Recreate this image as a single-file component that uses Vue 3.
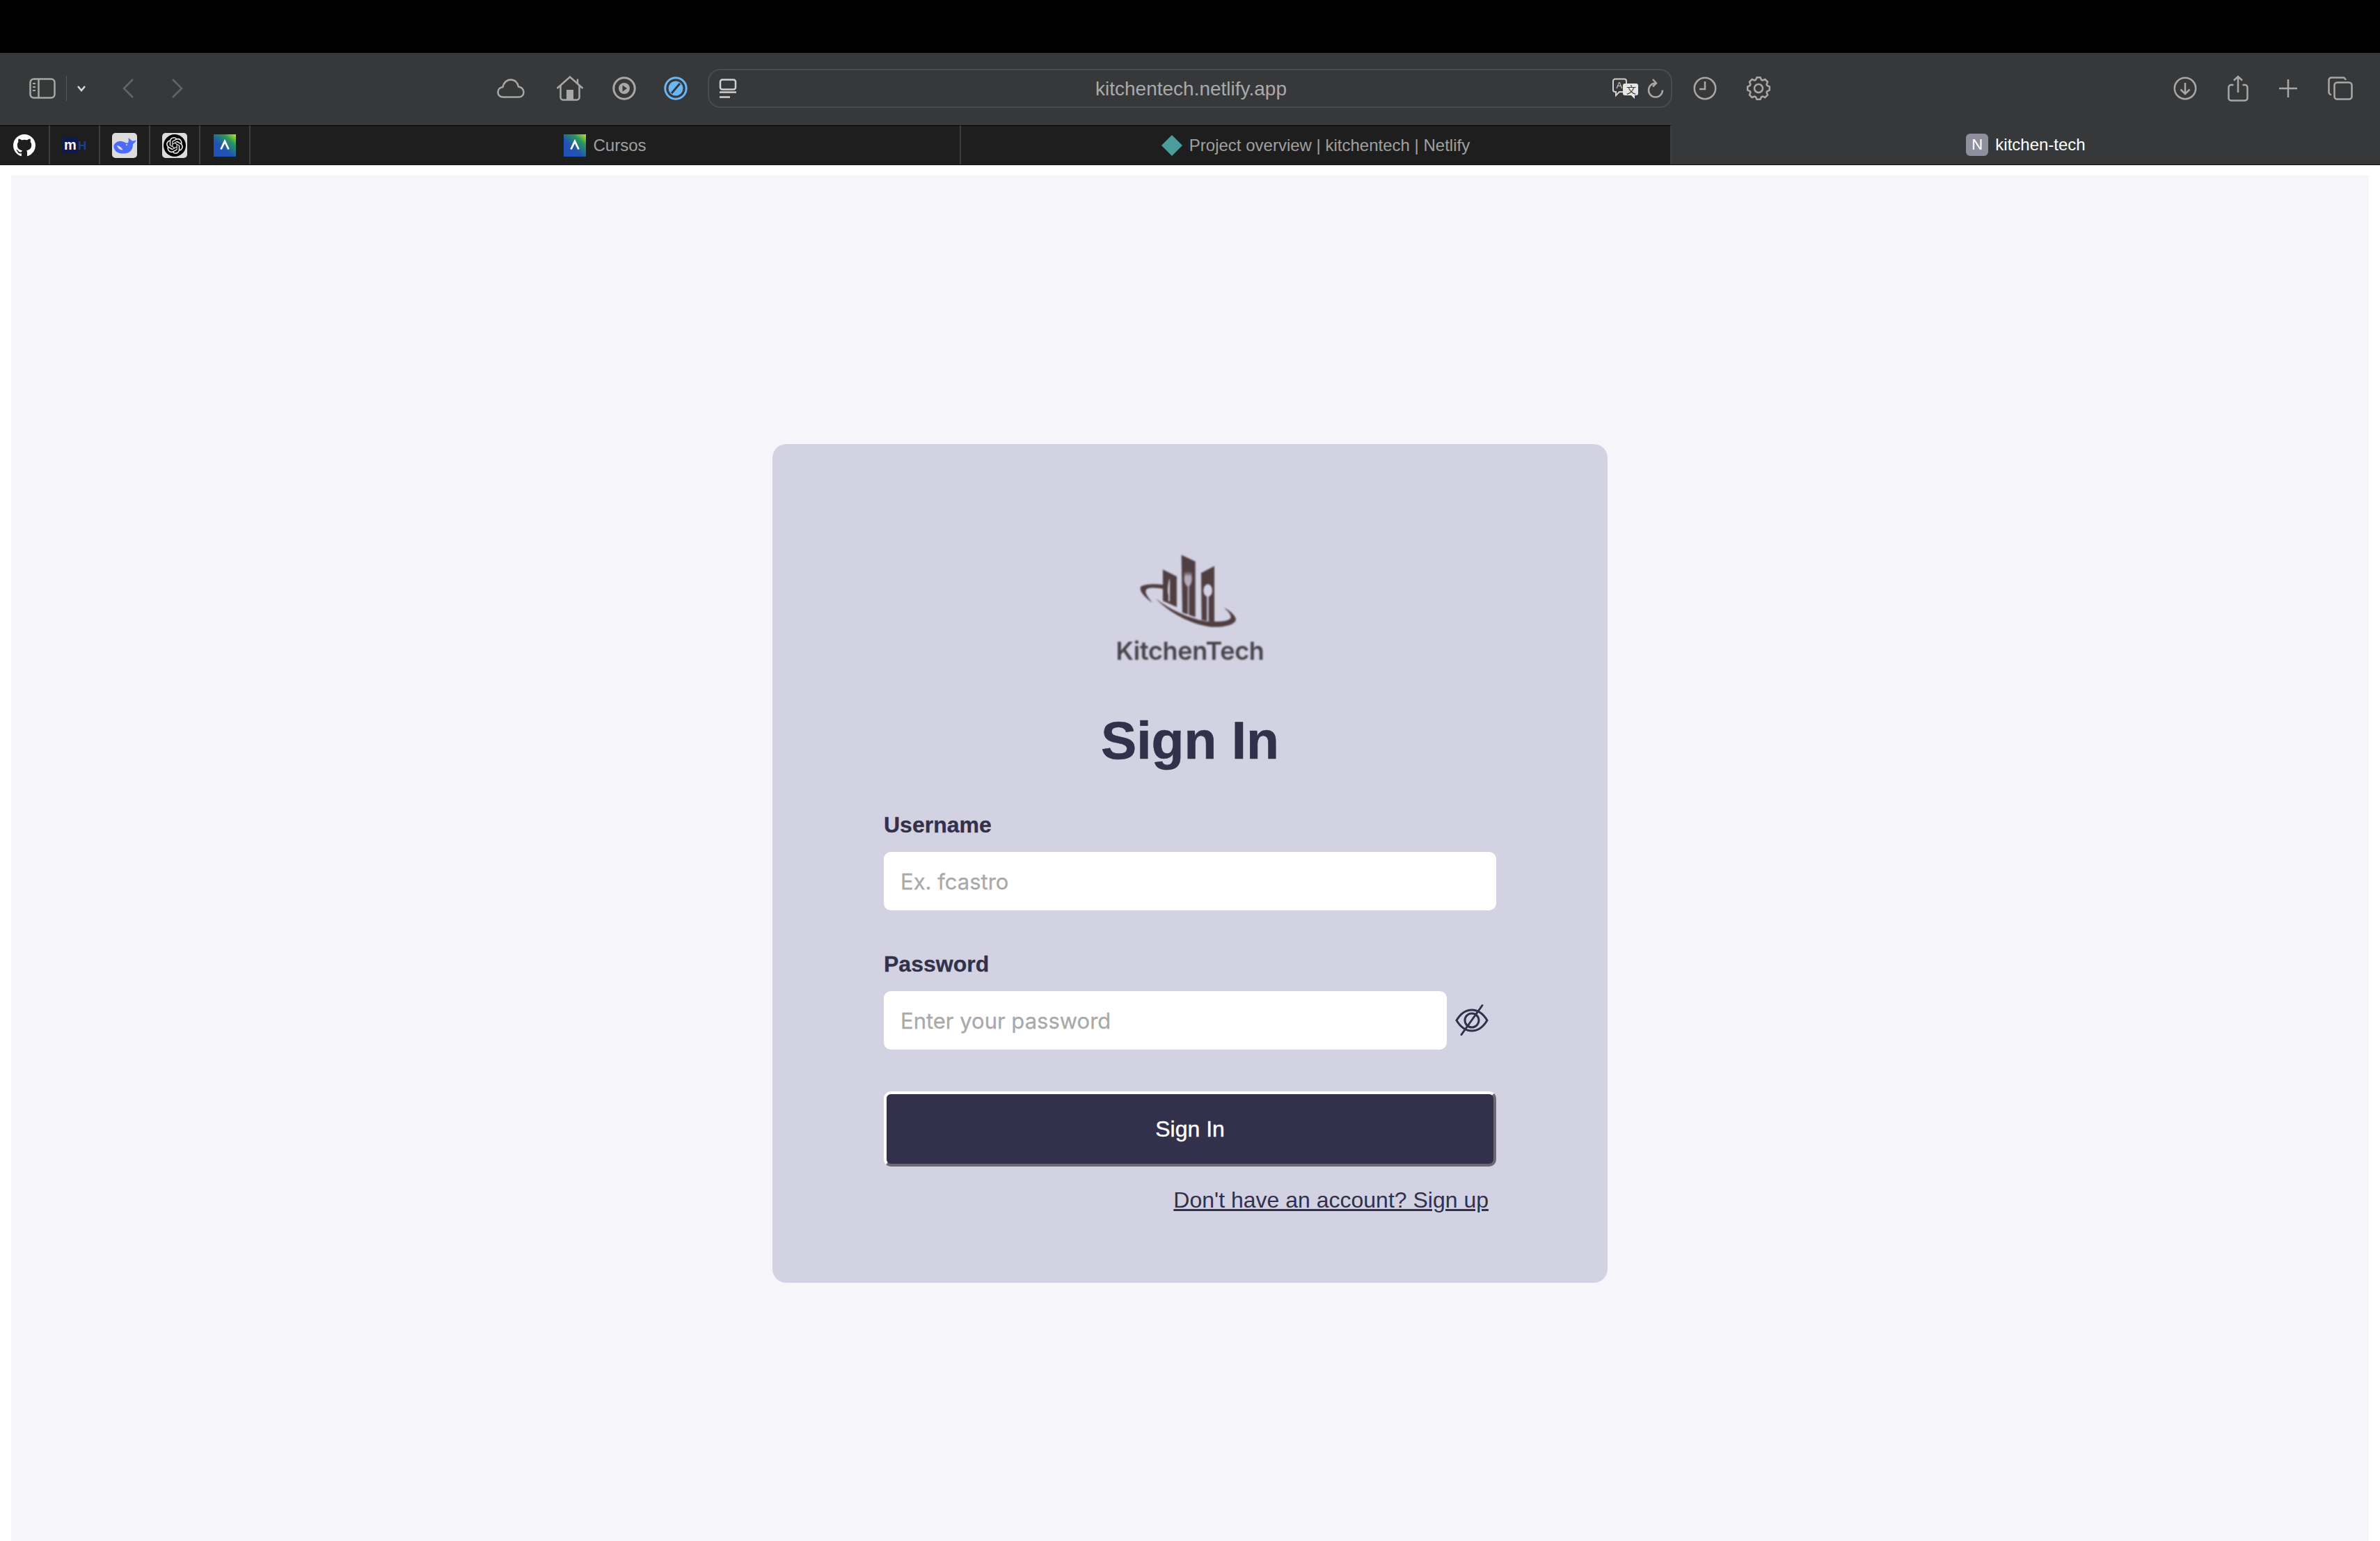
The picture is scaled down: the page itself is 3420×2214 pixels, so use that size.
<script setup>
import { ref } from "vue";

const username = ref("");
const password = ref("");

// safari gear, 8 teeth
const gearPath = () => {
  const pts = [];
  for (let i = 0; i < 8; i++) {
    const a = (i * Math.PI) / 4 - Math.PI / 2;
    const step = 0.2;
    pts.push([a - step * 1.6, 13]);
    pts.push([a - step * 0.8, 16]);
    pts.push([a + step * 0.8, 16]);
    pts.push([a + step * 1.6, 13]);
  }
  return (
    pts
      .map(([a, r], i) => {
        const x = (18 + r * Math.cos(a)).toFixed(1);
        const y = (17 + r * Math.sin(a)).toFixed(1);
        return `${i ? "L" : "M"}${x} ${y}`;
      })
      .join(" ") + " Z"
  );
};
</script>

<template>
  <div class="screen">
    <div class="notch-bar"></div>

    <div class="toolbar">
      <div class="nav-group">
        <svg class="ico" width="38" height="30" viewBox="0 0 38 30">
          <rect x="1.5" y="1.5" width="35" height="27" rx="5" />
          <path d="M13.5 1.5V28.5" />
          <path d="M5 8h4M5 13h4M5 18h4" stroke-width="2" />
        </svg>
        <span class="nav-sep"></span>
        <svg class="ico chevron-small" width="14" height="10" viewBox="0 0 14 10">
          <path d="M2 2l5 6 5-6" stroke="#d8d8d8" />
        </svg>
        <svg class="ico dim back" width="18" height="30" viewBox="0 0 18 30">
          <path d="M16 2L3 15l13 13" />
        </svg>
        <svg class="ico dim forward" width="18" height="30" viewBox="0 0 18 30">
          <path d="M2 2l13 13L2 28" />
        </svg>
      </div>

      <div class="site-group">
        <svg class="ico" width="40" height="28" viewBox="0 0 40 28">
          <path d="M9 26.5C4 26.5 1.5 23 1.5 19.5C1.5 15.5 4.5 12.5 8.5 12C9.5 6 14 1.5 20 1.5C26 1.5 30 6 31 11.5C35.5 12 38.5 15.5 38.5 19.5C38.5 23.5 35.5 26.5 31 26.5Z" />
        </svg>
        <svg class="ico" width="40" height="36" viewBox="0 0 40 36">
          <path d="M1.5 18L20 1.5L38.5 18" />
          <path d="M6.5 14V31a3.5 3.5 0 0 0 3.5 3.5H30a3.5 3.5 0 0 0 3.5-3.5V14" />
          <path d="M31 4.5V12" />
          <rect x="15" y="20" width="10" height="14" fill="#a8a8a8" stroke="none" />
        </svg>
        <svg class="ico" width="34" height="34" viewBox="0 0 34 34">
          <circle cx="17" cy="17" r="15.2" stroke-width="3" />
          <circle cx="17" cy="17" r="8" fill="#a8a8a8" stroke="none" />
          <path d="M14.5 12.5l6.5 4.5-6.5 4.5z" fill="#37383a" stroke="none" />
        </svg>
        <svg width="34" height="34" viewBox="0 0 34 34">
          <circle cx="17" cy="17" r="15.2" fill="none" stroke="#6ab7f8" stroke-width="3" />
          <circle cx="17" cy="17" r="10.5" fill="#6ab7f8" />
          <path d="M23 10L11 24" stroke="#37383a" stroke-width="3" />
        </svg>
      </div>

      <div class="address-bar">
        <svg class="ico reader" width="26" height="28" viewBox="0 0 26 28">
          <rect x="2" y="1.5" width="22" height="14" rx="3" stroke="#d0d0d0" />
          <path d="M1 19.5H25M1 26.5H16" stroke="#d0d0d0" />
        </svg>
        <span class="url">kitchentech.netlify.app</span>
        <svg class="translate" width="38" height="30" viewBox="0 0 38 30">
          <path d="M4 1.5H17a3 3 0 0 1 3 3V17a3 3 0 0 1-3 3H10L5 25V20H4a3 3 0 0 1-3-3V4.5a3 3 0 0 1 3-3z" fill="#37383a" stroke="#d0d0d0" stroke-width="2" />
          <text x="5.5" y="15" class="translate-a">A</text>
          <path d="M18 8H34a3 3 0 0 1 3 3V22a3 3 0 0 1-3 3H32V30L27 25H18a3 3 0 0 1-3-3V11a3 3 0 0 1 3-3z" fill="#e6e6e6" />
          <text x="20" y="22" class="translate-x">文</text>
        </svg>
        <svg class="ico reload" width="24" height="28" viewBox="0 0 24 28">
          <path d="M12 6.5A10 10 0 1 0 22 16.5" />
          <path d="M8 1l5 5.5-5 5" />
        </svg>
      </div>

      <div class="tool-group">
        <svg class="ico" width="34" height="34" viewBox="0 0 34 34">
          <circle cx="17" cy="17" r="15.2" />
          <path d="M17 7V18H9" />
        </svg>
        <svg class="ico" width="36" height="34" viewBox="0 0 36 34">
          <path :d="gearPath()" />
          <circle cx="18" cy="17" r="6" />
        </svg>
      </div>

      <div class="window-group">
        <svg class="ico" width="34" height="34" viewBox="0 0 34 34">
          <circle cx="17" cy="17" r="15.2" />
          <path d="M17 9V25M10.5 18.5L17 25l6.500-6.500" />
        </svg>
        <svg class="ico" width="30" height="38" viewBox="0 0 30 38">
          <path d="M8.500 14H5a3.500 3.500 0 0 0-3.500 3.500V33A3.500 3.500 0 0 0 5 36.500H25a3.500 3.500 0 0 0 3.500-3.500V17.500A3.500 3.500 0 0 0 25 14H21.500" />
          <path d="M15 2V25M9 7.500L15 2l6 5.500" />
        </svg>
        <svg class="ico" width="26" height="28" viewBox="0 0 26 28">
          <path d="M13 1V27M0 14H26" />
        </svg>
        <svg class="ico" width="36" height="34" viewBox="0 0 36 34">
          <path d="M5 26a3.500 3.500 0 0 1-3.500-3.500V5A3.500 3.500 0 0 1 5 1.500H22A3.500 3.500 0 0 1 25.500 5" />
          <rect x="9.500" y="8.500" width="25" height="24" rx="4" />
        </svg>
      </div>
    </div>

    <div class="tabstrip">
      <div class="pinned">
        <svg width="32" height="32" viewBox="0 0 16 16">
          <path fill="#fff" d="M8 0C3.58 0 0 3.58 0 8c0 3.54 2.29 6.53 5.47 7.59.4.07.55-.17.55-.38 0-.19-.01-.82-.01-1.49-2.01.37-2.53-.49-2.69-.94-.09-.23-.48-.94-.82-1.13-.28-.15-.68-.52-.01-.53.63-.01 1.08.58 1.23.82.72 1.21 1.87.87 2.33.66.07-.52.28-.87.51-1.07-1.78-.2-3.64-.89-3.64-3.95 0-.87.31-1.59.82-2.15-.08-.2-.36-1.02.08-2.12 0 0 .67-.21 2.2.82.64-.18 1.32-.27 2-.27.68 0 1.36.09 2 .27 1.53-1.04 2.2-.82 2.2-.82.44 1.1.16 1.92.08 2.12.51.56.82 1.27.82 2.15 0 3.07-1.87 3.75-3.65 3.95.29.25.54.73.54 1.48 0 1.07-.01 1.93-.01 2.2 0 .21.15.46.55.38A8.013 8.013 0 0016 8c0-4.420-3.580-8-8-8z" />
        </svg>
      </div>
      <div class="pinned">
        <svg width="34" height="24" viewBox="0 0 34 24">
          <rect x="0" y="1" width="22" height="22" fill="#0b1a54" />
          <text x="2" y="18" class="mh-m">m</text>
          <text x="22" y="18" class="mh-h">H</text>
        </svg>
      </div>
      <div class="pinned">
        <svg class="favicon-box" width="36" height="36" viewBox="0 0 36 36">
          <rect width="36" height="36" rx="5" fill="#dcdcdc" />
          <path fill="#4d6bfe" d="M2.500 17.500C5 13 10 11 14 12C18 13 20 15 22 14.500C24 14 24 11 23.500 7C26 9 28 10.500 29 11.500C31 11.500 33 11 34.500 10C34 13 32 15 30 16C30 21 28 26 24 28C20 30 12 30 8 28C4 26 2 22 2.500 17.500Z" />
          <path fill="#dcdcdc" d="M7 18C10 18 14 21 15.500 24.500C12 25 8 22 7 18Z" />
          <circle cx="21" cy="17" r="1.100" fill="#dcdcdc" />
        </svg>
      </div>
      <div class="pinned">
        <svg class="favicon-box" width="36" height="36" viewBox="0 0 36 36">
          <rect width="36" height="36" rx="5" fill="#dcdcdc" />
          <circle cx="18" cy="18" r="16" fill="#000" />
          <path transform="translate(6 6)" fill="#e8e8e8" d="M22.2819 9.8211a5.9847 5.9847 0 0 0-.5157-4.9108 6.0462 6.0462 0 0 0-6.5098-2.9A6.0651 6.0651 0 0 0 4.9807 4.1818a5.9847 5.9847 0 0 0-3.9977 2.9 6.0462 6.0462 0 0 0 .7427 7.0966 5.98 5.98 0 0 0 .511 4.9107 6.051 6.051 0 0 0 6.5146 2.9001A5.9847 5.9847 0 0 0 13.2599 24a6.0557 6.0557 0 0 0 5.7718-4.2058 5.9894 5.9894 0 0 0 3.9977-2.9001 6.0557 6.0557 0 0 0-.7475-7.0729zm-9.022 12.6081a4.4755 4.4755 0 0 1-2.8764-1.0408l.1419-.0804 4.7783-2.7582a.7948.7948 0 0 0 .3927-.6813v-6.7369l2.02 1.1686a.071.071 0 0 1 .038.052v5.5826a4.504 4.504 0 0 1-4.4945 4.4944zm-9.6607-4.1254a4.4708 4.4708 0 0 1-.5346-3.0137l.142.0852 4.783 2.7582a.7712.7712 0 0 0 .7806 0l5.8428-3.3685v2.3324a.0804.0804 0 0 1-.0332.0615L9.74 19.9502a4.4992 4.4992 0 0 1-6.1408-1.6464zM2.3408 7.8956a4.485 4.485 0 0 1 2.3655-1.9728V11.6a.7664.7664 0 0 0 .3879.6765l5.8144 3.3543-2.0201 1.1685a.0757.0757 0 0 1-.071 0l-4.8303-2.7865A4.504 4.504 0 0 1 2.3408 7.872zm16.5963 3.8558L13.1038 8.364 15.1192 7.2a.0757.0757 0 0 1 .071 0l4.8303 2.7913a4.4944 4.4944 0 0 1-.6765 8.1042v-5.6772a.79.79 0 0 0-.407-.667zm2.0107-3.0231l-.142-.0852-4.7735-2.7818a.7759.7759 0 0 0-.7854 0L9.409 9.2297V6.8974a.0662.0662 0 0 1 .0284-.0615l4.8303-2.7866a4.4992 4.4992 0 0 1 6.6802 4.66zM8.3065 12.863l-2.02-1.1638a.0804.0804 0 0 1-.038-.0567V6.0742a4.4992 4.4992 0 0 1 7.3757-3.4537l-.142.0805L8.704 5.459a.7948.7948 0 0 0-.3927.6813zm1.0976-2.3654l2.602-1.4998 2.6069 1.4998v2.9994l-2.5974 1.4997-2.6067-1.4997Z" />
        </svg>
      </div>
      <div class="pinned">
        <svg width="32" height="32" viewBox="0 0 32 32">
          <defs>
            <linearGradient id="cursosA" x1="1" y1="0" x2="0.3" y2="0.8">
              <stop offset="0" stop-color="#c4e52f" />
              <stop offset="0.35" stop-color="#2a9a58" />
              <stop offset="0.8" stop-color="#2152b5" />
            </linearGradient>
          </defs>
          <rect width="32" height="32" fill="url(#cursosA)" />
          <path d="M10.500 21.500L16 10l5.500 11.500" fill="none" stroke="#fff" stroke-width="2.800" />
        </svg>
      </div>

      <div class="tab">
        <svg width="32" height="32" viewBox="0 0 32 32">
          <defs>
            <linearGradient id="cursosB" x1="1" y1="0" x2="0.3" y2="0.8">
              <stop offset="0" stop-color="#c4e52f" />
              <stop offset="0.35" stop-color="#2a9a58" />
              <stop offset="0.8" stop-color="#2152b5" />
            </linearGradient>
          </defs>
          <rect width="32" height="32" fill="url(#cursosB)" />
          <path d="M10.500 21.500L16 10l5.500 11.500" fill="none" stroke="#fff" stroke-width="2.800" />
        </svg>
        <span>Cursos</span>
      </div>
      <div class="tab">
        <svg width="30" height="30" viewBox="0 0 30 30">
          <path d="M15 0L30 15L15 30L0 15Z" fill="#4a9d9c" />
        </svg>
        <span>Project overview | kitchentech | Netlify</span>
      </div>
      <div class="tab tab-active">
        <span class="notion-badge">N</span>
        <span>kitchen-tech</span>
      </div>
    </div>

    <div class="page-frame">
      <div class="page">
        <div class="card">
          <div class="logo">
            <svg width="420" height="150" viewBox="0 0 1260 450">
              <path fill="#503f42" d="M593 112L653 140V380L597 360Z" />
              <path fill="#503f42" d="M513 175L573 205V337L513 310Z" />
              <path fill="#503f42" d="M678 190L735 160V402L680 392Z" />
              <path fill="#d3d2e3" opacity="0.75" d="M607 182L611 205L616 182L621 205L626 182L631 205L636 182L638 215C638 232 631 242 626 248V372H620V248C613 242 605 232 605 215Z" />
              <path fill="#d3d2e3" d="M541 215C534 240 532 270 537 285V312H543V215Z" />
              <ellipse cx="707" cy="265" rx="19" ry="27" fill="#d3d2e3" />
              <rect x="703" y="285" width="7" height="115" fill="#d3d2e3" />
              <path fill="#503f42" d="M513 240C480 236 430 236 417 250C410 270 440 300 468 318C445 290 430 270 445 258C465 250 495 255 513 258Z" />
              <path fill="#503f42" d="M482 300C540 360 630 410 720 422C770 425 825 415 828 390C825 370 800 350 775 338C795 355 810 372 805 385C790 402 745 400 700 398C620 385 540 345 482 300Z" />
            </svg>
            <div class="logo-name">KitchenTech</div>
          </div>

          <h1 class="title">Sign In</h1>

          <form class="form" @submit.prevent>
            <label class="field-label" for="username">Username</label>
            <input id="username" v-model="username" class="field-input" type="text" placeholder="Ex. fcastro" />

            <label class="field-label second" for="password">Password</label>
            <div class="password-row">
              <input id="password" v-model="password" class="field-input" type="password" placeholder="Enter your password" />
              <svg class="eye" width="48" height="48" viewBox="0 0 48 48">
                <path d="M2 24C8 14 16 9 24 9S40 14 46 24C40 34 32 39 24 39S8 34 2 24Z" />
                <circle cx="24" cy="24" r="10" />
                <path d="M39 2.500L9 44.500" stroke-linecap="round" />
              </svg>
            </div>

            <button class="submit" type="submit">Sign In</button>

            <div class="signup-row">
              <a class="signup-link" href="#">Don't have an account? Sign up</a>
            </div>
          </form>
        </div>
      </div>
    </div>
  </div>
</template>

<style>
html,
body {
  margin: 0;
  overflow: hidden;
}
</style>

<style scoped>
.screen {
  height: 100vh;
  display: flex;
  flex-direction: column;
  background: #fff;
  overflow: hidden;
  font-family: "Liberation Sans", Arial, sans-serif;
}

.notch-bar {
  height: 76px;
  flex: none;
  background: #000;
}

.toolbar {
  height: 104px;
  flex: none;
  display: flex;
  align-items: center;
  padding: 0 39px 2px 42px;
  box-sizing: border-box;
  background: #37383a;
}

.ico {
  fill: none;
  stroke: #a8a8a8;
  stroke-width: 2.500;
  flex: none;
}

.ico.dim {
  stroke: #646567;
}

.nav-group {
  width: 672px;
  flex: none;
  display: flex;
  align-items: center;
}

.nav-sep {
  width: 1px;
  height: 36px;
  margin-left: 15px;
  background: #58595b;
}

.chevron-small {
  margin-left: 14px;
}

.back {
  margin-left: 51px;
}

.forward {
  margin-left: 53px;
}

.site-group {
  flex: none;
  display: grid;
  grid-template-columns: 85px 81px 74px 34px;
  justify-items: start;
  align-items: center;
}

.address-bar {
  width: 1386px;
  height: 56px;
  margin-left: 29px;
  flex: none;
  display: flex;
  align-items: center;
  box-sizing: border-box;
  padding: 0 10px 0 14px;
  border: 2.500px solid #4a4b4e;
  border-radius: 18px;
}

.url {
  flex: 1;
  text-align: center;
  font-size: 28px;
  color: #a9aaab;
  padding: 2px 0 0 47px;
}

.translate {
  flex: none;
  margin-right: 12px;
}

.translate-a {
  font: 13px "Liberation Sans", sans-serif;
  fill: #d0d0d0;
}

.translate-x {
  font: 14px "Noto Sans CJK SC", sans-serif;
  fill: #37383a;
}

.tool-group {
  margin-left: 30px;
  flex: none;
  display: flex;
  align-items: center;
  gap: 42px;
}

.window-group {
  margin-left: auto;
  flex: none;
  display: flex;
  align-items: center;
  gap: 44px;
}

.tabstrip {
  height: 57px;
  flex: none;
  display: flex;
  box-sizing: border-box;
  background: #1e1e1e;
  border-bottom: 1px solid #000;
}

.pinned {
  width: 70px;
  flex: none;
  display: flex;
  align-items: center;
  justify-content: center;
  border-top: 1px solid #000;
  border-right: 2px solid #3e3e3e;
}

.mh-m {
  font: 700 20px "Liberation Sans", sans-serif;
  fill: #fff;
}

.mh-h {
  font: 700 17px "Liberation Sans", sans-serif;
  fill: #1d3f8f;
}

.tab {
  width: 1019px;
  flex: none;
  display: flex;
  align-items: center;
  justify-content: center;
  gap: 10px;
  border-top: 1px solid #000;
  border-right: 2px solid #3e3e3e;
  font-size: 24px;
  color: #a0a0a0;
}

.tab-active {
  width: auto;
  flex: 1;
  border-top: none;
  border-right: none;
  background: #37383a;
  color: #fff;
}

.notion-badge {
  width: 32px;
  height: 32px;
  border-radius: 6px;
  background: #8f8f9e;
  color: #fff;
  font-size: 22px;
  line-height: 32px;
  text-align: center;
}

.page-frame {
  flex: 1;
  min-height: 0;
  display: flex;
  padding: 14px 16px 0;
  border-top: 1px solid #c4c4c4;
  background: #fff;
}

.page {
  flex: 1;
  display: flex;
  justify-content: center;
  align-items: flex-start;
  padding-top: 386px;
  background: #f5f5fa;
}

.card {
  width: 1200px;
  height: 1205px;
  box-sizing: border-box;
  padding: 122px 160px 0;
  border-radius: 20px;
  background: #d3d2e3;
}

.logo {
  height: 200px;
  display: flex;
  flex-direction: column;
  align-items: center;
  filter: blur(1px);
}

.logo svg {
  display: block;
}

.logo-name {
  height: 50px;
  font: 600 36px/50px Inter, sans-serif;
  color: #47444a;
  letter-spacing: -0.3px;
}

.title {
  margin: 59px 0 60px;
  text-align: center;
  font-size: 76.800px;
  line-height: 88px;
  font-weight: 700;
  color: #32304a;
  -webkit-text-stroke: 0.6px #32304a;
}

.form {
  display: flex;
  flex-direction: column;
}

.field-label {
  font-size: 32px;
  line-height: 36px;
  font-weight: 700;
  color: #32304a;
  margin-bottom: 21px;
  -webkit-text-stroke: 0.3px #32304a;
}

.field-label.second {
  margin-top: 59px;
}

.field-input {
  height: 84px;
  box-sizing: border-box;
  padding: 0 24px;
  border: none;
  border-radius: 10px;
  background: #fff;
  outline: none;
  font-family: Inter, sans-serif;
  font-size: 31px;
  color: #32304a;
}

.field-input::placeholder {
  color: #a9a9a9;
  -webkit-text-stroke: 0.3px #a9a9a9;
}

.password-row {
  display: flex;
  align-items: center;
}

.password-row .field-input {
  width: 809px;
  flex: none;
}

.eye {
  margin-left: 12px;
  flex: none;
  fill: none;
  stroke: #32304a;
  stroke-width: 3;
}

.submit {
  height: 108px;
  margin-top: 60px;
  box-sizing: border-box;
  border: 4px solid #fff;
  border-right-color: #6b6a70;
  border-bottom-color: #6b6a70;
  border-radius: 10px;
  background: #32304a;
  color: #fff;
  font-family: "Liberation Sans", sans-serif;
  font-size: 32px;
  -webkit-text-stroke: 0.4px #fff;
}

.signup-row {
  margin-top: 30px;
  padding-right: 11px;
  text-align: right;
  line-height: 36px;
}

.signup-link {
  font-size: 32px;
  color: #32304a;
  text-decoration: underline;
}
</style>
